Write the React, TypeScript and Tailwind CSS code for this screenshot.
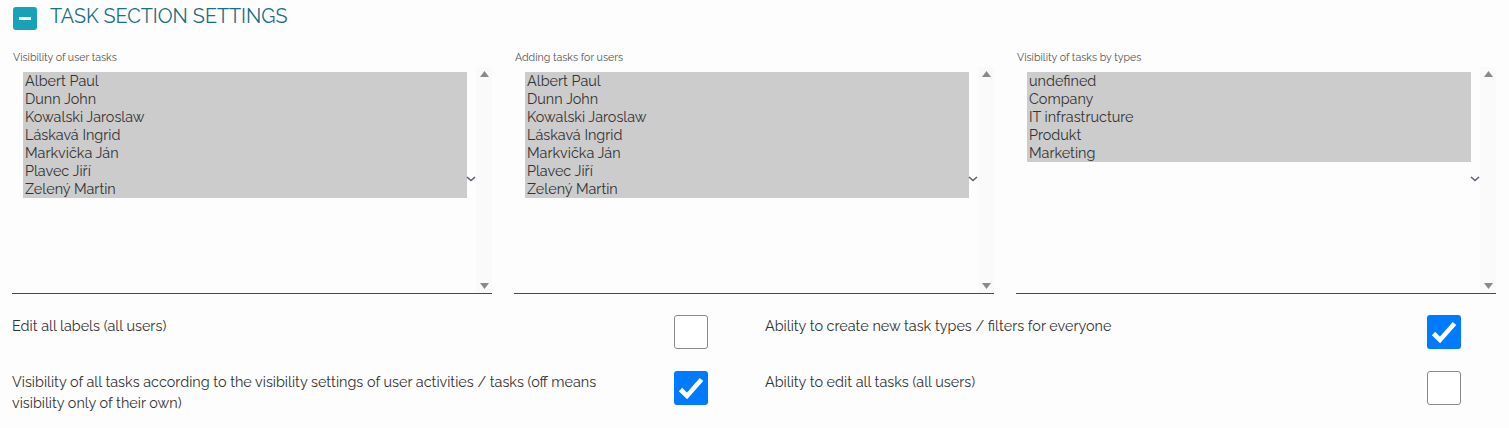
import React from 'react';

const users = ['Albert Paul', 'Dunn John', 'Kowalski Jaroslaw', 'Láskavá Ingrid', 'Markvička Ján', 'Plavec Jiří', 'Zelený Martin'];
const types = ['undefined', 'Company', 'IT infrastructure', 'Produkt', 'Marketing'];

const MultiSelect: React.FC<{ label: string; options: string[] }> = ({ label, options }) => (
  <div className="flex flex-col">
    <div className="text-[10.6px] text-[#555] leading-[14px] mb-[3px] pl-px">{label}</div>
    <div className="relative h-[227px] border-b border-[#1d5c5c] flex">
      <div className="flex-1 pl-[11px] pt-[5px]">
        <div className="bg-[#cccccc] mr-[9px]">
          {options.map((o) => (
            <div key={o} className="h-[18px] leading-[18px] text-[14.4px] text-[#333] pl-[2px]">
              {o}
            </div>
          ))}
        </div>
      </div>
      {/* select chevron */}
      <svg className="absolute right-[16px] top-1/2 -translate-y-1/2 mt-[-1px]" width="10" height="6" viewBox="0 0 10 6">
        <path d="M1 1l4 3.5L9 1" fill="none" stroke="#5a6470" strokeWidth="1.6" />
      </svg>
      {/* scrollbar */}
      <div className="w-[16px] bg-[#fafafa] flex flex-col justify-between items-center py-[4px]">
        <svg width="9" height="6" viewBox="0 0 9 6"><path d="M4.5 0L9 6H0z" fill="#8a8a8a" /></svg>
        <svg width="9" height="6" viewBox="0 0 9 6"><path d="M0 0h9L4.5 6z" fill="#8a8a8a" /></svg>
      </div>
    </div>
  </div>
);

const Check: React.FC<{ checked?: boolean }> = ({ checked }) =>
  checked ? (
    <div className="w-[34px] h-[34px] rounded-[3px] bg-[#007bff] flex items-center justify-center shrink-0">
      <svg width="26" height="24" viewBox="0 0 26 24">
        <path d="M2.5 13.5l6.5 6.5L23.5 3.5" fill="none" stroke="#fff" strokeWidth="4.6" />
      </svg>
    </div>
  ) : (
    <div className="w-[34px] h-[34px] rounded-[3px] border border-[#8a8a8a] bg-white shrink-0" />
  );

const Row: React.FC<{ text: string; checked?: boolean }> = ({ text, checked }) => (
  <div className="flex justify-between items-start">
    <div className="text-[14.4px] leading-[21px] text-[#333] max-w-[610px]">{text}</div>
    <Check checked={checked} />
  </div>
);

export default function App() {
  return (
    <div className="w-[1509px] h-[428px] bg-[#fdfdfd] font-['Raleway','Lato',sans-serif] px-[12px]">
      <div className="flex items-center h-[36px]">
        <div className="w-[24px] h-[23px] bg-[#17a2b8] rounded-[3px] flex items-center justify-center ml-[1px]">
          <div className="w-[12px] h-[3px] bg-white" />
        </div>
        <h2 className="ml-[13px] text-[19.8px] leading-[24px] text-[#1b6f82] mt-[-4px]">TASK SECTION SETTINGS</h2>
      </div>
      <div className="grid grid-cols-3 gap-[22px] mt-[14px] pr-[1px]">
        <MultiSelect label="Visibility of user tasks" options={users} />
        <MultiSelect label="Adding tasks for users" options={users} />
        <MultiSelect label="Visibility of tasks by types" options={types} />
      </div>
      <div className="grid grid-cols-[696px_696px] gap-x-[57px] gap-y-[22px] mt-[21px]">
        <Row text="Edit all labels (all users)" />
        <Row text="Ability to create new task types / filters for everyone" checked />
        <Row text="Visibility of all tasks according to the visibility settings of user activities / tasks (off means visibility only of their own)" checked />
        <Row text="Ability to edit all tasks (all users)" />
      </div>
    </div>
  );
}
